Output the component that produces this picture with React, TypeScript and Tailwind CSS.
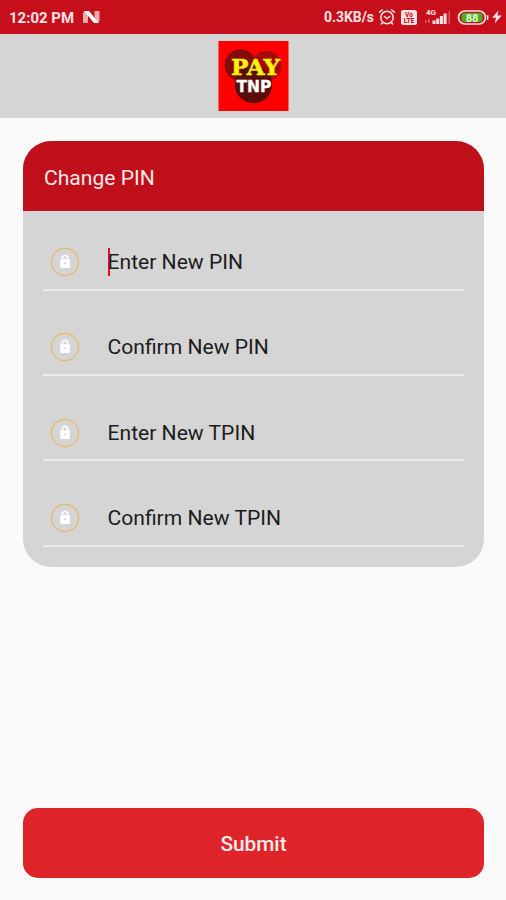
import { useState } from "react";

const fields = ["Enter New PIN", "Confirm New PIN", "Enter New TPIN", "Confirm New TPIN"];

function StatusBar() {
  return (
    <div className="flex h-[34px] items-center justify-between bg-[#c60f1b] pl-[9px] pr-[3px] text-[#ffe3e3]">
      <div className="flex items-center gap-[9px]">
        <svg width="65" height="20" viewBox="0 0 65 20">
          <text x="0" y="16" fontSize="14.5" fontWeight="700" fill="currentColor" textLength="65" lengthAdjust="spacingAndGlyphs">
            12:02 PM
          </text>
        </svg>
        <svg width="17" height="14" viewBox="0 0 17 14">
          <path d="M0 13V3l2-2h3v12zM11.500 13V1h5v10l-2 2z" fill="#f3a9ad" />
          <path d="M1 1h5l10 12h-5z" fill="#fff" />
        </svg>
      </div>

      <div className="flex items-center">
        <svg width="51" height="20" viewBox="0 0 51 20">
          <text x="0" y="15" fontSize="14" fontWeight="700" fill="currentColor" textLength="50" lengthAdjust="spacingAndGlyphs">
            0.3KB/s
          </text>
        </svg>
        {/* alarm */}
        <svg className="ml-[3px]" width="18" height="18" viewBox="0 0 18 18" fill="none" stroke="currentColor" strokeWidth="1.5" strokeLinecap="round">
          <circle cx="9" cy="9.5" r="6.2" />
          <path d="M1.5 4.2 4.3 2M16.5 4.2 13.7 2M4.5 14.7 3.3 16M13.5 14.7l1.2 1.3M6.500 8.500 9 10.700l2.700-2.200" />
        </svg>
        {/* VoLTE */}
        <svg className="ml-[5px]" width="16" height="15" viewBox="0 0 16 15">
          <rect width="16" height="15" rx="2.5" fill="currentColor" />
          <g fill="#c60f1b" fontSize="6.5" fontWeight="800" textAnchor="middle">
            <text x="8" y="7">Vo</text>
            <text x="8" y="13.3">LTE</text>
          </g>
        </svg>
        {/* signal */}
        <svg className="ml-[7px]" width="28" height="18" viewBox="0 0 28 18">
          <text x="2" y="7" fontSize="8" fontWeight="700" fill="currentColor">4G</text>
          <path d="M1 12h1.500v3H1zM4 11h1.500v4H4z" fill="currentColor" opacity="0.4" />
          <path d="M8.500 12.500h3V16h-3zM12.200 10.500h3V16h-3zM15.900 8h3v8h-3zM19.600 5.500h3V16h-3z" fill="currentColor" />
          <path d="M24.600 3h1.300v13h-1.300z" fill="currentColor" opacity="0.4" />
        </svg>
        {/* battery */}
        <svg className="ml-[5px]" width="32" height="15" viewBox="0 0 32 15">
          <rect x="1.500" y="1" width="27" height="13" rx="6.500" fill="none" stroke="currentColor" strokeWidth="1.700" />
          <rect x="4.500" y="3" width="21" height="9" rx="3" fill="#4bad20" />
          <path d="M30.700 5v5" stroke="currentColor" strokeWidth="1.400" />
          <text x="15" y="11.500" fontSize="11" fontWeight="700" textAnchor="middle" fill="#e5ffd9">88</text>
        </svg>
        <svg className="ml-[2px]" width="12" height="14" viewBox="0 0 12 14">
          <path d="M7.500.5 1 7.800h4L3.700 13.500 10.800 5.500H6.500z" fill="currentColor" />
        </svg>
      </div>
    </div>
  );
}

function Logo() {
  return (
    <svg width="71" height="70" viewBox="0 0 71 70">
      <rect x="0.500" width="70" height="70" fill="#fe0000" />
      <circle cx="22.500" cy="24" r="15.800" fill="#850b09" />
      <circle cx="48.500" cy="25" r="15" fill="#a50b08" />
      <circle cx="35.500" cy="43.500" r="18.700" fill="#5b0d0a" />
      <text x="13" y="34" fontFamily="DejaVu Serif, serif" fontWeight="700" fontSize="22" fill="#fff10a" stroke="#fff10a" strokeWidth="0.500" textLength="49" lengthAdjust="spacingAndGlyphs">
        PAY
      </text>
      <text x="18.500" y="51" fontFamily="DejaVu Sans, sans-serif" fontWeight="700" fontSize="15.500" fill="#fff" stroke="#fff" strokeWidth="0.300" textLength="35" lengthAdjust="spacingAndGlyphs">
        TNP
      </text>
    </svg>
  );
}

function LockIcon() {
  return (
    <svg width="30" height="30" viewBox="0 0 30 30">
      <circle cx="15" cy="15" r="13.600" fill="none" stroke="#eab765" strokeWidth="1.200" />
      <path d="M12.300 13v-2a2.700 2.700 0 0 1 5.400 0v2" fill="none" stroke="#fff" strokeWidth="1.700" />
      <rect x="10.200" y="12.300" width="9.600" height="8.600" rx="1" fill="#fff" />
      <circle cx="15" cy="16.300" r="1" fill="#d5d5d5" />
    </svg>
  );
}

export default function App() {
  const [active, setActive] = useState(0);

  return (
    <div className="flex h-[900px] w-full flex-col bg-[#fafafa] font-[Roboto,sans-serif]">
      <StatusBar />

      <header className="flex h-[84px] items-center justify-center bg-[#d5d5d5] pl-px">
        <Logo />
      </header>

      <main className="flex flex-1 flex-col justify-between pt-[23px] pr-[22px] pb-[22px] pl-[23px]">
        <section className="h-[426px] w-full overflow-hidden rounded-[28px] bg-[#d5d5d5]">
          <h1 className="flex h-[70px] items-center bg-[#be0f1b] px-[21px] pt-[3px] text-[21.100px] text-[#ffe6e6]">
            Change PIN
          </h1>
          <div className="flex flex-col gap-[29.400px] px-5 pt-6">
            {fields.map((field, i) => (
              <div
                key={field}
                onClick={() => setActive(i)}
                className="flex h-[55.900px] items-center border-b-2 border-[#ebebeb] pl-[7px]"
              >
                <LockIcon />
                <div className="ml-[27.500px] flex items-center text-[21.100px] text-[#1c1c1c]">
                  {active === i && <span className="-mr-0.5 h-7 w-0.5 bg-[#e0101c]" />}
                  <span>{field}</span>
                </div>
              </div>
            ))}
          </div>
        </section>

        <button className="h-[70px] w-full rounded-[15px] bg-[#de2428] pt-[3px] text-[20.800px] font-medium text-[#ffeded]">
          Submit
        </button>
      </main>
    </div>
  );
}
